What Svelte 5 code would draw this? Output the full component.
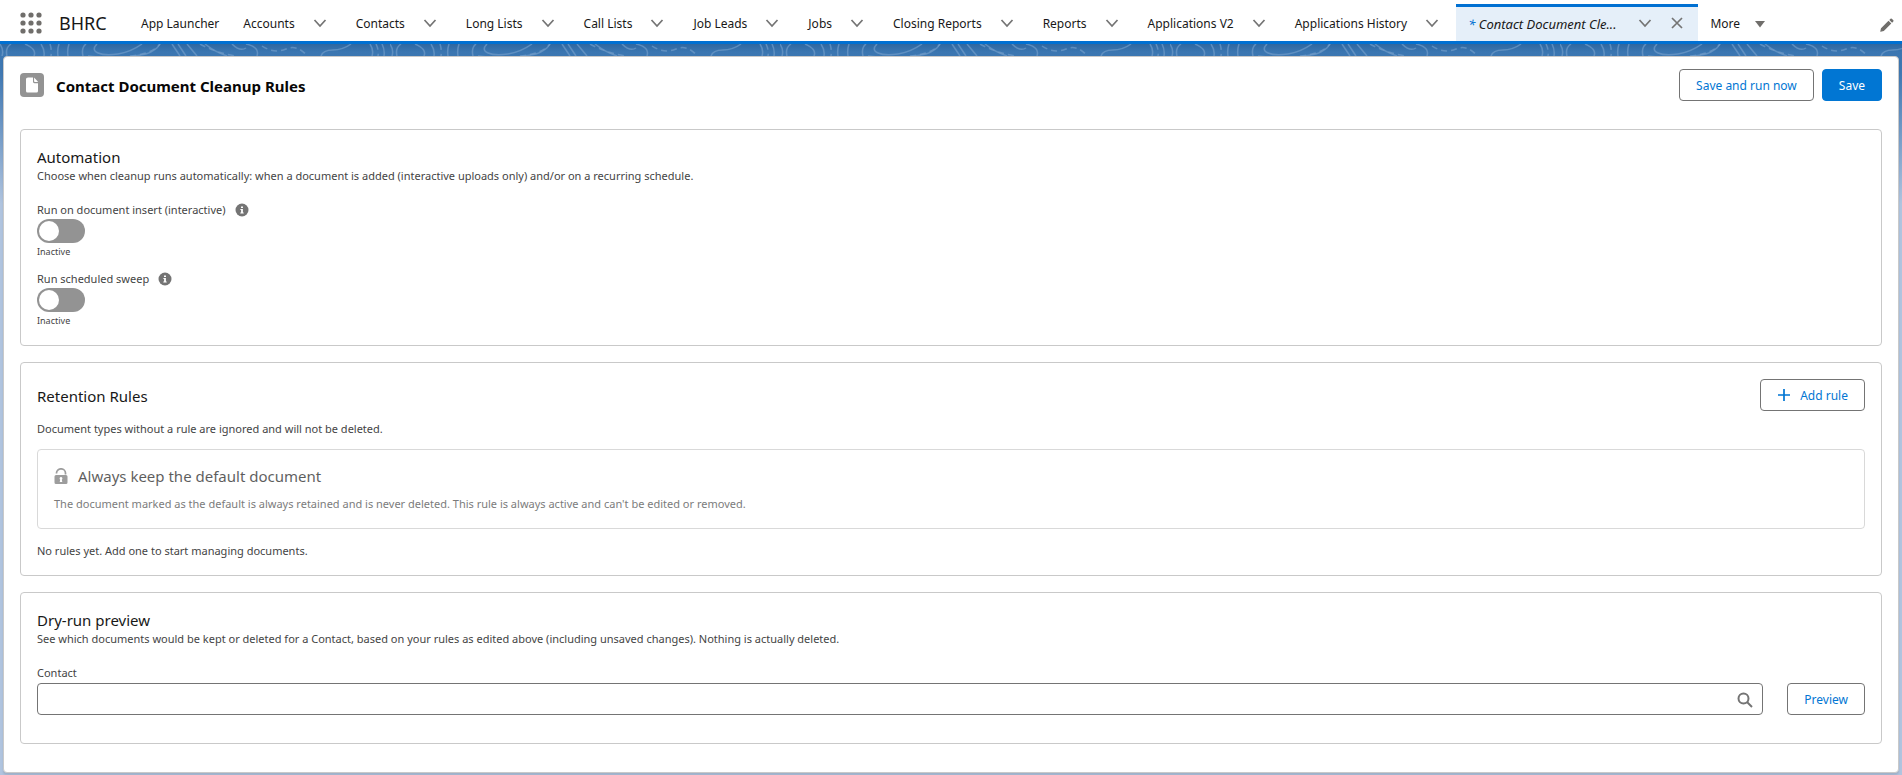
<script lang="ts">
interface NavItem {
  label: string;
  menu: boolean;
}

interface Toggle {
  id: string;
  label: string;
  checked: boolean;
}

const navItems: NavItem[] = [
  { label: 'App Launcher', menu: false },
  { label: 'Accounts', menu: true },
  { label: 'Contacts', menu: true },
  { label: 'Long Lists', menu: true },
  { label: 'Call Lists', menu: true },
  { label: 'Job Leads', menu: true },
  { label: 'Jobs', menu: true },
  { label: 'Closing Reports', menu: true },
  { label: 'Reports', menu: true },
  { label: 'Applications V2', menu: true },
  { label: 'Applications History', menu: true },
];

let toggles: Toggle[] = $state([
  { id: 'run-on-insert', label: 'Run on document insert (interactive)', checked: false },
  { id: 'run-scheduled', label: 'Run scheduled sweep', checked: false },
]);

let contact = $state('');
</script>

{#snippet chevron()}
  <svg class="chevron" viewBox="0 0 14 14" aria-hidden="true">
    <path d="M1.500 4l5.500 6 5.500-6" />
  </svg>
{/snippet}

<header class="nav-bar">
  <button class="waffle" aria-label="App Launcher">
    <svg viewBox="0 0 22 22" aria-hidden="true">
      {#each [3, 11, 19] as cy}
        {#each [3, 11, 19] as cx}
          <circle {cx} {cy} r="2.6" />
        {/each}
      {/each}
    </svg>
  </button>
  <span class="app-name">BHRC</span>
  <nav class="nav-items">
    {#each navItems as item}
      <div class="nav-item">
        <a href="#top">{item.label}</a>
        {#if item.menu}
          <button class="icon-button" aria-label="{item.label} list">
            {@render chevron()}
          </button>
        {/if}
      </div>
    {/each}
    <div class="nav-item active">
      <a href="#top"><span class="unsaved">*</span> Contact Document Cle...</a>
      <button class="icon-button" aria-label="Tab actions">
        {@render chevron()}
      </button>
      <button class="icon-button close" aria-label="Close tab">
        <svg class="chevron" viewBox="0 0 14 14" aria-hidden="true">
          <path d="M2 2l10 10M12 2L2 12" />
        </svg>
      </button>
    </div>
    <button class="more">
      More
      <svg viewBox="0 0 12 8" aria-hidden="true"><path d="M1 1h10L6 7.500z" /></svg>
    </button>
  </nav>
  <button class="edit-nav" aria-label="Edit navigation items">
    <svg viewBox="0 0 14 14" aria-hidden="true">
      <path d="M1 10.200l7.500-7.500 2.800 2.800L3.800 13 .6 13.700q-.4 0-.3-.5zM9.300 1.900l1.200-1.200q.6-.6 1.300 0l1.500 1.500q.6.600 0 1.300l-1.200 1.200z" />
    </svg>
  </button>
</header>

<div class="backdrop">
  <svg class="topography" aria-hidden="true">
    <defs>
      <pattern id="contours" width="390" height="24" patternUnits="userSpaceOnUse">
        <path d="M0 0q4 6 2 12M7 12q-2-8 4-12M25 0q12 5 9 12M41 0q4 6 3 12M59 0q-2 6-1 12M69 0q-2 6-1 12M83 12q-2-8 3-12M97 0q-6 6 1 9t20 1 24-10M88 12q30 4 58-2 10-3 14-10M172 0l8 12M178 0l8 12M187 0l10 12M205 0q10 8 22 12M232 0q8 8 14 4M246 0q14 3 11 12M321 12q2-6 12-6t18-6M370 0q4 6 2 12M382 0q3 6 2 12" />
        <path class="dashed" d="M50 0q2 6 1 12M130 12q22-2 30-12M200 0q16 9 36 12M262 2q12 8 24 3t22 8M376 0q3 6 2 12" />
      </pattern>
    </defs>
    <rect width="100%" height="12" fill="url(#contours)" />
  </svg>

  <main class="page-card">
    <div class="page-header">
      <svg class="page-icon" viewBox="0 0 24 24" aria-hidden="true">
        <rect width="24" height="24" rx="4" fill="#939393" />
        <path d="M8 4.500h5v4.300q0 1.400 1.400 1.400H18v7.800q0 1.500-1.500 1.500h-9Q6 19.500 6 18V6q0-1.500 2-1.500zM14.300 4.700l3.500 3.700q.3.500-.3.500h-2.700q-.7 0-.7-.7V4.900q0-.5.200-.2z" fill="#fff" />
      </svg>
      <h1>Contact Document Cleanup Rules</h1>
      <div class="page-actions">
        <button class="button">Save and run now</button>
        <button class="button brand">Save</button>
      </div>
    </div>

    <section class="panel">
      <h2>Automation</h2>
      <p>Choose when cleanup runs automatically: when a document is added (interactive uploads only) and/or on a recurring schedule.</p>
      <div class="toggles">
        {#each toggles as toggle}
          <div class="toggle">
            <div class="toggle-label">
              <label for={toggle.id}>{toggle.label}</label>
              <button class="help" aria-label="Help">
                <svg viewBox="0 0 14 14" aria-hidden="true">
                  <circle cx="7" cy="7" r="6.500" />
                  <path d="M6 3.400h2v1.600H6zM5.400 6h2.500v3.500h.8v1H5.300v-1h.8V7h-.7z" />
                </svg>
              </button>
            </div>
            <input id={toggle.id} type="checkbox" role="switch" bind:checked={toggle.checked} />
            <span class="toggle-state">{toggle.checked ? 'Active' : 'Inactive'}</span>
          </div>
        {/each}
      </div>
    </section>

    <section class="panel">
      <div class="panel-header">
        <h2>Retention Rules</h2>
        <button class="button">
          <svg class="plus" viewBox="0 0 12 12" aria-hidden="true"><path d="M6 0v12M0 6h12" /></svg>
          Add rule
        </button>
      </div>
      <p class="note">Document types without a rule are ignored and will not be deleted.</p>
      <div class="default-rule">
        <h3>
          <svg class="lock" viewBox="0 0 14 16" aria-hidden="true">
            <path d="M2.500 5.500V5a4.500 4.200 0 0 1 9 0v1.500" fill="none" stroke="#747474" stroke-width="1.700" />
            <path fill-rule="evenodd" d="M2 7h10q1.500 0 1.500 1.500v6q0 1.500-1.500 1.500H2Q.5 16 .5 14.500v-6Q.5 7 2 7zm5 2a1.500 1.500 0 0 0-.8 2.700L5.700 14h2.600l-.5-2.300A1.500 1.500 0 0 0 7 9z" fill="#747474" />
          </svg>
          Always keep the default document
        </h3>
        <p>The document marked as the default is always retained and is never deleted. This rule is always active and can't be edited or removed.</p>
      </div>
      <p class="note">No rules yet. Add one to start managing documents.</p>
    </section>

    <section class="panel">
      <h2>Dry-run preview</h2>
      <p>See which documents would be kept or deleted for a Contact, based on your rules as edited above (including unsaved changes). Nothing is actually deleted.</p>
      <label class="field-label" for="contact">Contact</label>
      <div class="lookup-row">
        <div class="lookup">
          <input id="contact" type="text" bind:value={contact} />
          <svg viewBox="0 0 16 16" aria-hidden="true">
            <circle cx="6.500" cy="6.500" r="5" />
            <path d="M10 10l5 5" />
          </svg>
        </div>
        <button class="button">Preview</button>
      </div>
    </section>
  </main>
</div>

<style>
:global(body) {
  margin: 0;
  background: #b0c4df;
  font-family: "Segoe UI", "Noto Sans", "Open Sans", sans-serif;
  font-size: 11px;
  line-height: 18px;
  color: #444;
}

button {
  font-family: inherit;
  font-size: 12px;
  line-height: 18px;
  padding: 0;
  border: 0;
  background: none;
  cursor: pointer;
}

svg {
  display: block;
}

h1,
h2,
h3,
p {
  margin: 0;
  font-weight: 400;
}

/* Navigation */
.nav-bar {
  display: flex;
  height: 41px;
  padding: 0 8px 0 20px;
  border-bottom: 3px solid #0070d2;
  background: #fff;
}

.waffle {
  align-self: center;
  margin-top: 4px;
}

.waffle svg {
  width: 22px;
  height: 22px;
  fill: #706e6b;
}

.app-name {
  width: 70px;
  margin: 5px 0 0 17px;
  font-size: 18px;
  line-height: 36px;
  color: #181818;
}

.nav-items {
  display: flex;
  flex: 1;
  min-width: 0;
  padding-top: 4px;
  font-size: 12px;
}

.nav-item {
  display: flex;
  align-items: center;
  box-sizing: border-box;
  padding: 0 12px;
  border-top: 3px solid transparent;
  white-space: nowrap;
}

.nav-item a {
  color: #181818;
  text-decoration: none;
}

.icon-button {
  display: flex;
  align-items: center;
  justify-content: center;
  width: 24px;
  height: 24px;
  margin: 0 0 2px 13px;
}

.chevron {
  width: 14px;
  height: 14px;
  fill: none;
  stroke: #747474;
  stroke-width: 1.700;
}

.nav-item.active {
  padding-right: 9px;
  border-top-color: #0070d2;
  background: #e5eff9;
  font-size: 13px;
  font-style: italic;
}

.active .icon-button {
  margin-left: 17px;
}

.active .icon-button.close {
  margin-left: 8px;
}

.unsaved {
  color: #0070d2;
}

.more {
  display: flex;
  align-items: center;
  gap: 14px;
  padding: 3px 12px 0;
  color: #181818;
}

.more svg {
  width: 12px;
  height: 8px;
  fill: #706e6b;
}

.edit-nav {
  align-self: center;
  margin-top: 8px;
}

.edit-nav svg {
  width: 14px;
  height: 14px;
  fill: #706e6b;
}

/* Page */
.backdrop {
  position: relative;
  padding: 12px 3px 2px;
  background: linear-gradient(#2f67a0, #3b76b1 8px, #4179b3 30px, #b0c4df 160px);
}

.topography {
  position: absolute;
  top: 0;
  left: 0;
  width: 100%;
  height: 12px;
}

.topography path {
  fill: none;
  stroke: #6f9cc9;
  stroke-width: 1.500;
  opacity: 0.7;
}

.topography .dashed {
  stroke-dasharray: 6 4;
}

.page-card {
  padding: 12px 16px 28px;
  border: 1px solid #c9c9c9;
  border-radius: 4px;
  background: #fff;
  box-shadow: 0 2px 2px rgba(0, 0, 0, 0.1);
}

.page-header {
  display: flex;
  align-items: center;
  margin-bottom: 28px;
}

.page-icon {
  width: 24px;
  height: 24px;
}

h1 {
  flex: 1;
  margin-left: 12px;
  padding-top: 2px;
  font-size: 15px;
  line-height: 24px;
  font-weight: 700;
  color: #080707;
}

.page-actions {
  display: flex;
  gap: 8px;
}

.button {
  display: flex;
  align-items: center;
  box-sizing: border-box;
  height: 32px;
  padding: 2px 16px 0;
  border: 1px solid #747474;
  border-radius: 4px;
  background: #fff;
  color: #0176d3;
  white-space: nowrap;
}

.button.brand {
  border-color: #0176d3;
  background: #0176d3;
  color: #fff;
}

.panel {
  padding: 16px 16px 15px;
  border: 1px solid #c9c9c9;
  border-radius: 4px;
}

.panel + .panel {
  margin-top: 16px;
}

h2,
h3 {
  font-size: 15px;
  line-height: 20px;
  color: #181818;
}

h2 {
  padding-top: 1px;
}

.toggles {
  margin-top: 16px;
}

.toggle + .toggle {
  margin-top: 9px;
}

.toggle-label {
  display: flex;
  align-items: center;
  gap: 9px;
}

.help svg {
  width: 14px;
  height: 14px;
}

.help circle {
  fill: #747474;
}

.help path {
  fill: #fff;
}

.toggle input {
  appearance: none;
  display: block;
  box-sizing: border-box;
  width: 48px;
  height: 24px;
  margin: 0;
  padding: 2px;
  border-radius: 12px;
  background: #939393;
  cursor: pointer;
}

.toggle input::before {
  content: "";
  display: block;
  width: 20px;
  height: 20px;
  border-radius: 50%;
  background: #fff;
}

.toggle input:checked {
  background: #0176d3;
}

.toggle input:checked::before {
  margin-left: 24px;
}

.toggle-state {
  display: block;
  font-size: 9px;
  line-height: 18px;
}

.panel-header {
  display: flex;
  align-items: center;
  justify-content: space-between;
}

.plus {
  width: 12px;
  height: 12px;
  margin: 0 10px 2px 1px;
  stroke: #0176d3;
  stroke-width: 1.700;
}

.note {
  margin-top: 9px;
}

.default-rule {
  margin: 11px 0 13px;
  padding: 16px 16px 15px;
  border: 1px solid #c9c9c9;
  border-radius: 4px;
  opacity: 0.7;
}

.default-rule h3 {
  display: flex;
  align-items: center;
  gap: 10px;
  margin-bottom: 9px;
}

.lock {
  width: 14px;
  height: 16px;
}

.field-label {
  display: block;
  margin: 16px 0 1px;
}

.lookup-row {
  display: flex;
  gap: 24px;
  margin-bottom: 13px;
}

.lookup {
  position: relative;
  flex: 1;
}

.lookup input {
  box-sizing: border-box;
  width: 100%;
  height: 32px;
  padding: 0 32px 0 12px;
  border: 1px solid #747474;
  border-radius: 4px;
  background: #fff;
  font: inherit;
  color: #181818;
}

.lookup svg {
  position: absolute;
  top: 9px;
  right: 10px;
  width: 16px;
  height: 16px;
  fill: none;
  stroke: #747474;
  stroke-width: 2;
}
</style>
